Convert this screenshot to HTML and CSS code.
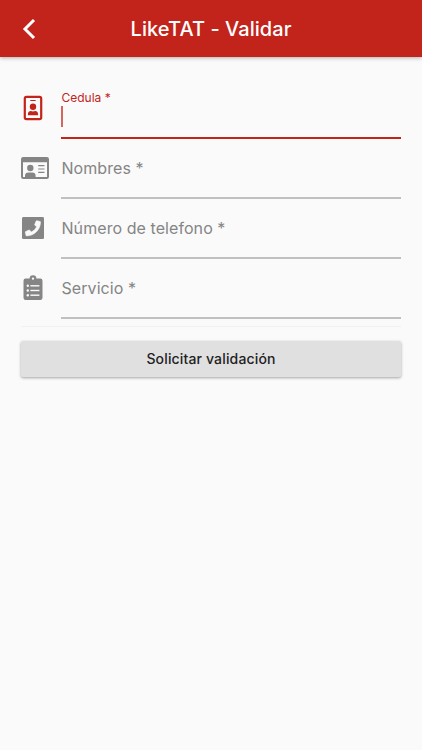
FILE: index.html
```html
<!DOCTYPE html>
<html lang="es">
<head>
  <meta charset="UTF-8" />
  <meta name="viewport" content="width=device-width, initial-scale=1.0"/>
  <title>LikeTAT - Validar</title>
  <link rel="stylesheet" href="styles.css">
</head>
<body>

  <header class="app-bar">
    <a href="#" class="back" aria-label="Volver">
      <svg width="14" height="22" viewBox="0 0 14 22" fill="none" stroke="currentColor" stroke-width="3"><path d="M12 2L3 11L12 20"/></svg>
    </a>
    <h1>LikeTAT - Validar</h1>
  </header>

  <form class="form">
    <div class="field active">
      <div class="icon">
        <svg width="20" height="26" viewBox="0 0 20 26" fill="currentColor">
          <rect x="1.8" y="1.9" width="16.4" height="22.2" rx="1.6" fill="none" stroke="currentColor" stroke-width="2.2"/>
          <rect x="7.2" y="4.9" width="5.6" height="1.2" rx=".6"/>
          <circle cx="10" cy="11.7" r="3.2"/>
          <path d="M4.9 20.3V18.9C4.9 17.2 6.2 16.1 7.9 16.1C9.2 16.6 10.8 16.6 12.1 16.1C13.8 16.1 15.1 17.2 15.1 18.9V20.3Z"/>
        </svg>
      </div>
      <div class="input">
        <label>Cedula *</label>
        <span class="caret"></span>
      </div>
    </div>

    <div class="field">
      <div class="icon card">
        <svg width="28" height="22" viewBox="0 0 28 22" fill="currentColor">
          <path fill-rule="evenodd" d="M2.2 0H25.8Q28 0 28 2.2V19.8Q28 22 25.8 22H2.2Q0 22 0 19.8V2.2Q0 0 2.2 0ZM2 5.3V20H26V5.3Z"/>
          <circle cx="9.3" cy="11" r="3.2"/>
          <path d="M4 20.2V18.7C4 16.7 5.4 15.6 7.3 15.6H11.3C13.2 15.6 14.6 16.7 14.6 18.7V20.2Z"/>
          <path d="M17.2 8.6H23.5M17.2 12H23.5M17.2 15.4H23.5" fill="none" stroke="currentColor" stroke-width="1.2"/>
        </svg>
      </div>
      <div class="input"><label>Nombres *</label></div>
    </div>

    <div class="field">
      <div class="icon">
        <svg width="22" height="22" viewBox="0 0 448 448" fill="currentColor">
          <path d="M420 0H28A28 28 0 0 0 0 28V420A28 28 0 0 0 28 448H420A28 28 0 0 0 448 420V28A28 28 0 0 0 420 0Z"/>
          <path fill="#fafafa" stroke="#fafafa" stroke-width="12" d="M94 384.6a12 12 0 0 1-11.7-9.3l-15-65a12 12 0 0 1 6.98-13.73l70-30a12 12 0 0 1 14 3.44l31 37.88A231.8 231.8 0 0 0 299.8 197.3L261.9 166.3a12 12 0 0 1-3.44-14l30-70A12 12 0 0 1 302.2 75.3l65 15A12 12 0 0 1 376.5 102C376.5 258.3 249.9 384.6 94 384.6Z"/>
        </svg>
      </div>
      <div class="input"><label>Número de telefono *</label></div>
    </div>

    <div class="field">
      <div class="icon">
        <svg width="20" height="26" viewBox="0 0 20 26" fill="currentColor">
          <path fill-rule="evenodd" d="M2.7 3.6H6.6A3.4 3.4 0 0 1 13.4 3.6H17.3Q19.5 3.6 19.5 5.8V22.8Q19.5 25 17.3 25H2.7Q.5 25 .5 22.8V5.8Q.5 3.6 2.7 3.6ZM10 2.4A1.2 1.2 0 1 0 10 4.8A1.2 1.2 0 1 0 10 2.4Z"/>
          <g fill="#fafafa">
            <circle cx="4.8" cy="10.8" r="1.2"/>
            <circle cx="4.8" cy="15.5" r="1.2"/>
            <circle cx="4.8" cy="20.2" r="1.2"/>
            <rect x="7.4" y="10.1" width="9" height="1.4"/>
            <rect x="7.4" y="14.8" width="9" height="1.4"/>
            <rect x="7.4" y="19.5" width="9" height="1.4"/>
          </g>
        </svg>
      </div>
      <div class="input"><label>Servicio *</label></div>
    </div>

    <hr>
    <button type="button" class="button">Solicitar validación</button>
  </form>

</body>
</html>
```
FILE: styles.css
```css
* {
  box-sizing: border-box;
}
body {
  margin: 0;
  min-height: 100vh;
  background: #fafafa;
  font-family: Inter, "Liberation Sans", sans-serif;
}
.app-bar {
  display: grid;
  grid-template-columns: 60px 1fr 60px;
  align-items: center;
  height: 57px;
  background: #c2241b;
  color: white;
  box-shadow: 0 1px 4px rgba(0, 0, 0, 0.3);
}
.app-bar h1 {
  margin: 0;
  font-size: 20px;
  line-height: 24px;
  font-weight: 500;
  letter-spacing: 0.05px;
  text-align: center;
  white-space: nowrap;
}
.back {
  display: flex;
  padding-left: 22px;
  color: white;
}
.form {
  padding: 22px 21px 0;
}
.field {
  display: flex;
  height: 60px;
  color: #858585;
}
.icon {
  display: flex;
  align-items: center;
  justify-content: center;
  width: 24px;
  height: 58px;
  margin-right: 16px;
}
.icon svg {
  flex: none;
}
.card {
  width: 27px;
  margin-right: 13px;
}
.input {
  flex: 1;
  padding-top: 17px;
  border-bottom: 2px solid #c0c0c0;
}
.input label {
  display: block;
  padding-left: 0.5px;
  font-size: 16px;
  line-height: 24px;
  letter-spacing: 0.07px;
}
.active {
  color: #c2241b;
}
.active .input {
  padding-top: 10px;
  border-bottom: 2px solid #c2241b;
}
.active .input label {
  font-size: 12px;
  line-height: 17px;
  letter-spacing: 0;
}
.caret {
  display: block;
  width: 2px;
  height: 21px;
  background: #d4665f;
}
hr {
  height: 1px;
  margin: 7px 0 14px;
  border: none;
  background: #f1f1f1;
}
.button {
  display: block;
  width: 100%;
  height: 36px;
  padding: 0 0 2px;
  border: none;
  border-radius: 2px;
  background: #e0e0e0;
  color: #222;
  font-family: inherit;
  font-size: 14px;
  font-weight: 500;
  letter-spacing: 0.15px;
  box-shadow: 0 1px 3px rgba(0, 0, 0, 0.35);
}
```
